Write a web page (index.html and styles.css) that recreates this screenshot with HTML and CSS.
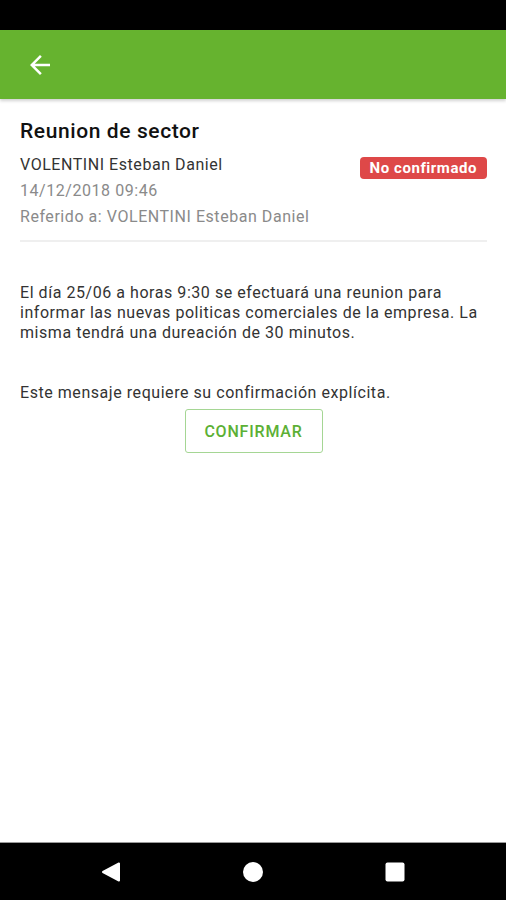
FILE: index.html
```html
<!DOCTYPE html>
<html lang="es">
<head>
    <meta charset="UTF-8">
    <meta name="viewport" content="width=device-width, initial-scale=1.0">
    <title>Reunion de sector</title>
    <link rel="stylesheet" href="styles.css">
</head>
<body>
    <div class="status-bar"></div>

    <header class="app-bar">
        <button class="back-btn" type="button" aria-label="Volver">
            <svg width="30" height="30" viewBox="0 0 24 24">
                <path d="M20 11H7.83l5.59-5.59L12 4l-8 8 8 8 1.41-1.41L7.83 13H20v-2z" fill="#fff"/>
            </svg>
        </button>
    </header>

    <main class="content">
        <h1 class="title">Reunion de sector</h1>
        <div class="meta-row">
            <div class="meta">
                <p class="sender">VOLENTINI Esteban Daniel</p>
                <p class="date">14/12/2018 09:46</p>
                <p class="date">Referido a: VOLENTINI Esteban Daniel</p>
            </div>
            <span class="badge">No confirmado</span>
        </div>

        <hr class="divider">

        <p class="message">El día 25/06 a horas 9:30 se efectuará una reunion para informar las nuevas politicas comerciales de la empresa. La misma tendrá una dureación de 30 minutos.</p>

        <p class="notice">Este mensaje requiere su confirmación explícita.</p>
        <div class="actions">
            <button class="confirm-btn" type="button">Confirmar</button>
        </div>
    </main>

    <nav class="nav-bar">
        <svg width="20" height="20" viewBox="0 0 20 20">
            <path d="M18 1.5 L18 18.5 L2 10 Z" fill="#fff" stroke="#fff" stroke-width="2" stroke-linejoin="round"/>
        </svg>
        <svg width="20" height="20" viewBox="0 0 20 20">
            <circle cx="10" cy="10" r="10" fill="#fff"/>
        </svg>
        <svg width="20" height="20" viewBox="0 0 20 20">
            <rect x="0.5" y="0.5" width="19" height="19" rx="2" fill="#fff"/>
        </svg>
    </nav>
</body>
</html>
```

FILE: styles.css
```css
* {
    box-sizing: border-box;
}

body {
    margin: 0;
    height: 900px;
    display: flex;
    flex-direction: column;
    font-family: 'Roboto', 'Noto Sans', sans-serif;
    letter-spacing: 0.55px;
    background-color: #fff;
    color: #333;
}

p {
    margin: 0;
}

.status-bar {
    height: 30px;
    background-color: #000;
}

.app-bar {
    height: 69px;
    background-color: #66b32f;
    display: flex;
    align-items: center;
    padding-left: 25px;
    box-shadow: 0 2px 3px rgba(0, 0, 0, 0.18);
    position: relative;
}

.back-btn {
    background: none;
    border: none;
    padding: 0;
    display: flex;
    cursor: pointer;
}

.content {
    flex: 1;
    padding: 20px 19px 0 20px;
}

.title {
    margin: 0;
    font-size: 21px;
    line-height: 24px;
    font-weight: 500;
    letter-spacing: 0.6px;
    color: #111;
}

.meta-row {
    display: flex;
    justify-content: space-between;
    align-items: flex-start;
    margin-top: 9px;
}

.sender,
.date {
    font-size: 16px;
    line-height: 26px;
}

.sender {
    color: #333;
}

.date {
    color: #8a8a8a;
}

.badge {
    margin-top: 5px;
    height: 22px;
    padding: 0 10px;
    border-radius: 4px;
    background-color: #de4848;
    color: #fff;
    font-size: 15px;
    font-weight: 700;
    line-height: 22px;
}

.divider {
    margin: 10px 0 0;
    border: none;
    border-top: 2px solid #efefef;
}

.message {
    margin-top: 41px;
    font-size: 16px;
    line-height: 20px;
    color: #333;
}

.notice {
    margin-top: 40px;
    font-size: 16px;
    line-height: 20px;
    color: #333;
}

.actions {
    display: flex;
    justify-content: center;
    margin-top: 6px;
}

.confirm-btn {
    width: 138px;
    height: 44px;
    background-color: #fff;
    border: 1.5px solid #a5d694;
    border-radius: 3px;
    color: #5cb035;
    font-family: inherit;
    font-size: 16px;
    font-weight: 500;
    letter-spacing: 0.8px;
    text-transform: uppercase;
    cursor: pointer;
}

.nav-bar {
    height: 58px;
    background-color: #000;
    border-top: 1px solid #9a9a9a;
    display: flex;
    align-items: center;
    justify-content: center;
    gap: 122px;
    padding-right: 1px;
}
```
